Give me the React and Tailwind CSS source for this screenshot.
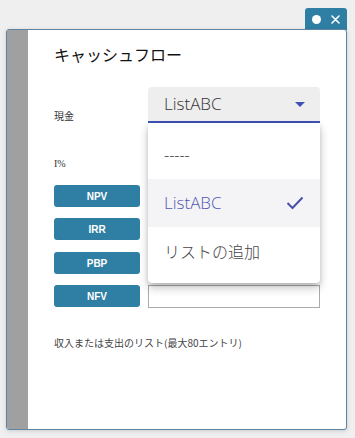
import React from "react";

const jp = { fontFamily: '"Noto Sans CJK JP", "Noto Sans", sans-serif' };
const os = { fontFamily: '"Open Sans", "Noto Sans CJK JP", sans-serif' };

function Btn({ label, mt }) {
  return (
    <div className={`flex items-start gap-[8px] ${mt}`}>
      <div
        className="w-[86px] h-[22px] rounded-[3px] bg-[#2f7fa5] text-white text-[10px] font-bold flex items-center justify-center"
        style={{ fontFamily: '"Liberation Sans", Arial, sans-serif' }}
      >
        {label}
      </div>
      <div className="w-[172px] h-[23px] border border-[#ababab] bg-white" />
    </div>
  );
}

export default function App() {
  return (
    <div className="w-[355px] h-[438px] bg-[#efefef] relative overflow-hidden">
      <div className="absolute left-[305px] top-[8px] w-[42px] h-[22px] bg-[#2f7fa5] rounded-t-[3px] flex items-center justify-center gap-[10px]">
        <div className="w-[9px] h-[9px] rounded-full bg-white" />
        <svg width="9" height="9" viewBox="0 0 9 9">
          <path d="M1 1L8 8M8 1L1 8" stroke="white" strokeWidth="1.6" strokeLinecap="round" />
        </svg>
      </div>
      <div className="absolute left-[6px] top-[29px] w-[341px] h-[401px] border border-[#5d84a2] rounded-[3px] bg-white flex overflow-visible shadow-[0_1px_4px_rgba(0,0,0,0.15)]">
        <div className="w-[21px] h-full bg-[#a0a0a0] rounded-bl-[2px]" />
        <div className="pl-[26px] pt-[12px] flex flex-col">
          <div className="text-[16px] leading-[24px] text-[#111]" style={jp}>キャッシュフロー</div>
          <div className="flex items-end gap-[8px] mt-[21px]">
            <div className="w-[86px] text-[10px] leading-[14px] text-[#333]" style={jp}>現金</div>
            <div className="relative w-[172px]">
              <div className="h-[36px] bg-[#eeeeee] rounded-t-[4px] border-b-2 border-[#3f51b5] flex items-center pl-[16px] pr-[15px] justify-between">
                <span className="text-[17px] text-[#333] font-light" style={os}>ListABC</span>
                <svg width="10" height="5" viewBox="0 0 10 5">
                  <path d="M0 0L10 0L5 5Z" fill="#3f51b5" />
                </svg>
              </div>
              <div className="absolute left-0 top-full w-[172px] bg-white rounded-b-[4px] py-[8px] z-10 shadow-[0_5px_10px_rgba(0,0,0,0.22),0_2px_4px_rgba(0,0,0,0.12)]">
                <div className="h-[48px] flex items-center pl-[16px] text-[16px] text-[#333] font-light" style={os}>-----</div>
                <div className="h-[48px] flex items-center justify-between pl-[16px] pr-[16px] bg-[#f4f4f6]">
                  <span className="text-[17px] text-[#5358b5] font-light" style={os}>ListABC</span>
                  <svg width="18" height="14" viewBox="0 0 18 14">
                    <path d="M1.5 7L6.5 12L16.5 1.5" fill="none" stroke="#4a50a8" strokeWidth="2" />
                  </svg>
                </div>
                <div className="h-[48px] flex items-center pl-[16px] text-[16px] text-[#444] font-light" style={jp}>リストの追加</div>
              </div>
            </div>
          </div>
          <div className="flex items-start gap-[8px] mt-[34px]">
            <div className="w-[86px] text-[10px] leading-[14px] text-[#333]" style={{ fontFamily: '"Liberation Serif", serif' }}>I%</div>
          </div>
          <Btn label="NPV" mt="mt-[14px]" />
          <Btn label="IRR" mt="mt-[10px]" />
          <Btn label="PBP" mt="mt-[11px]" />
          <Btn label="NFV" mt="mt-[10px]" />
          <div className="mt-[28px] text-[10px] leading-[14px] text-[#444]" style={jp}>収入または支出のリスト(最大80エントリ)</div>
        </div>
      </div>
    </div>
  );
}
